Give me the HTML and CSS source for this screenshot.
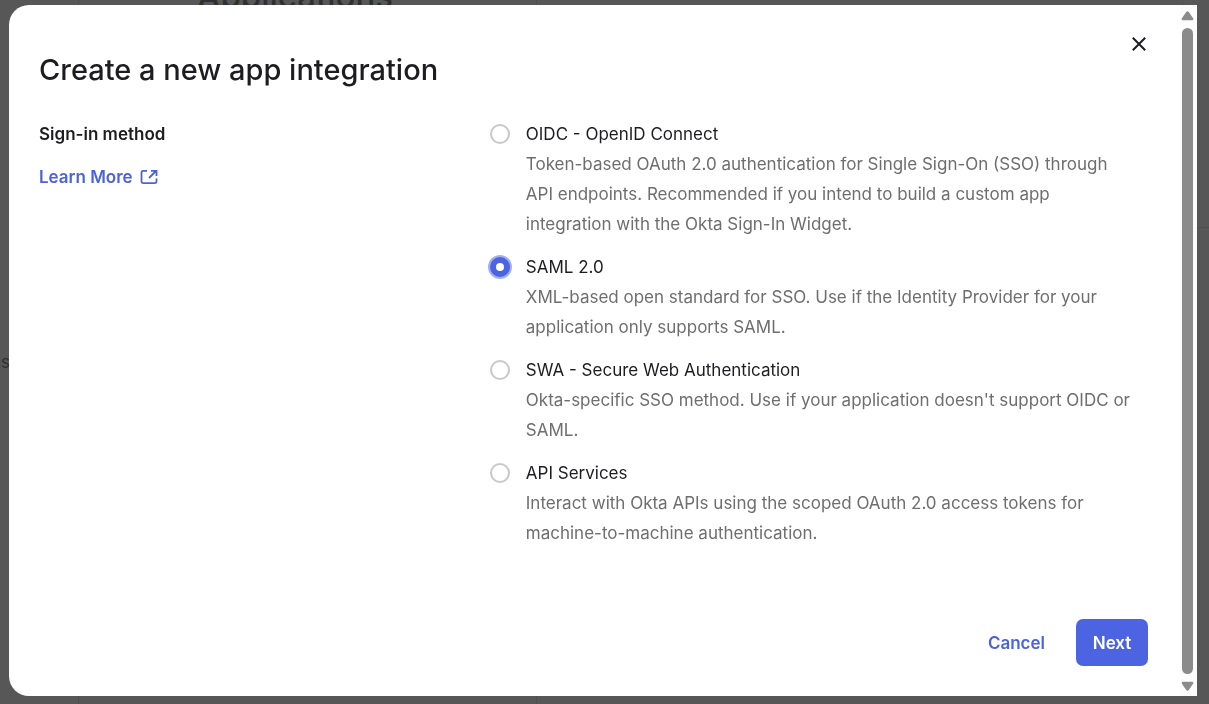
FILE: index.html
```html
<!DOCTYPE html>
<html lang="en">
<head>
    <meta charset="UTF-8">
    <meta name="viewport" content="width=device-width, initial-scale=1.0">
    <title>Create a new app integration</title>
    <link rel="stylesheet" href="styles.css">
</head>
<body>
    <div class="page">
        <nav class="sidebar">Applications</nav>
        <div class="page-main">
            <h2>Applications</h2>
        </div>
        <div class="page-list"></div>
    </div>

    <div class="backdrop">
        <div class="modal" role="dialog" aria-labelledby="modal-title">
            <form class="modal-body">
                <div class="modal-header">
                    <h1 id="modal-title">Create a new app integration</h1>
                    <button type="button" class="close" aria-label="Close">
                        <svg width="16" height="16" viewBox="0 0 16 16" fill="none" stroke="#1d1d21" stroke-width="2">
                            <path d="M1.8 1.8l12.4 12.4M14.2 1.8L1.8 14.2"/>
                        </svg>
                    </button>
                </div>

                <div class="columns">
                    <div class="intro">
                        <h2 id="method-label">Sign-in method</h2>
                        <a href="#" class="learn-more">Learn More
                            <svg width="18" height="16" viewBox="0 0 18 16" fill="none" stroke="currentColor" stroke-width="1.8">
                                <path d="M7 1.900H3Q1.500 1.900 1.500 3.400v9.200q0 1.500 1.500 1.500h12q1.500 0 1.500-1.500V9.500"/>
                                <path d="M9 9l7-7M11 1.900h5.500V7"/>
                            </svg>
                        </a>
                    </div>

                    <div class="options" role="radiogroup" aria-labelledby="method-label">
                        <div class="option">
                            <input type="radio" name="method" id="oidc">
                            <div>
                                <label for="oidc">OIDC - OpenID Connect</label>
                                <p>Token-based OAuth 2.0 authentication for Single Sign-On (SSO) through API endpoints. Recommended if you intend to build a custom app integration with the Okta Sign-In Widget.</p>
                            </div>
                        </div>
                        <div class="option">
                            <input type="radio" name="method" id="saml" checked>
                            <div>
                                <label for="saml">SAML 2.0</label>
                                <p>XML-based open standard for SSO. Use if the Identity Provider for your application only supports SAML.</p>
                            </div>
                        </div>
                        <div class="option">
                            <input type="radio" name="method" id="swa">
                            <div>
                                <label for="swa">SWA - Secure Web Authentication</label>
                                <p>Okta-specific SSO method. Use if your application doesn't support OIDC or SAML.</p>
                            </div>
                        </div>
                        <div class="option">
                            <input type="radio" name="method" id="api">
                            <div>
                                <label for="api">API Services</label>
                                <p>Interact with Okta APIs using the scoped OAuth 2.0 access tokens for machine-to-machine authentication.</p>
                            </div>
                        </div>
                    </div>
                </div>

                <div class="actions">
                    <button type="button" class="cancel">Cancel</button>
                    <button type="submit" class="next">Next</button>
                </div>
            </form>

            <div class="scrollbar" aria-hidden="true">
                <svg width="13" height="10" viewBox="0 0 14 10" fill="#8b8b8b">
                    <path d="M7 0q.8 0 1.400.800l4.600 6.700q.900 2-1 2H2q-1.900 0-1-2L5.600.8Q6.200 0 7 0z"/>
                </svg>
                <div class="thumb"></div>
                <svg width="13" height="10" viewBox="0 0 14 10" fill="#8b8b8b">
                    <path d="M7 10q.8 0 1.400-.8L13 2.500q.900-2-1-2H2q-1.900 0-1 2l4.600 6.700q.6.800 1.400.8z"/>
                </svg>
            </div>
        </div>
    </div>
</body>
</html>
```
FILE: styles.css
```css
* {
    box-sizing: border-box;
}
body {
    margin: 0;
    font-family: Inter, "Liberation Sans", sans-serif;
    font-size: 17px;
    line-height: 30px;
    color: #1d1d21;
}
h1, h2, p {
    margin: 0;
}
button {
    font: inherit;
    border: none;
    background: none;
    cursor: pointer;
}

/* page behind the dialog */
.page {
    display: flex;
    height: 100vh;
    overflow: hidden;
    background: #575757;
    color: #303030;
}
.sidebar {
    width: 79px;
    padding-top: 347px;
    border-right: 1px solid #4f4f4f;
    direction: rtl;
    text-indent: 68px;
}
.page-main {
    width: 458px;
    padding-left: 118px;
    border-right: 1px solid #4f4f4f;
}
.page-main h2 {
    margin-top: -22px;
    font-size: 33px;
    line-height: 36px;
    font-weight: 500;
}
.page-list {
    flex: 1;
    margin-top: 227px;
    border-top: 1px solid #4f4f4f;
}

.backdrop {
    position: fixed;
    inset: 0;
    display: flex;
    padding: 5px 12px 8px 9px;
}
.modal {
    flex: 1;
    display: flex;
    overflow: hidden;
    background: #fff;
    border-radius: 20px 0 0 20px;
}
.modal-body {
    flex: 1;
    display: flex;
    flex-direction: column;
    padding: 30px 33px 30px 30px;
}
.modal-header {
    display: flex;
    justify-content: space-between;
    align-items: flex-start;
}
.modal-header h1 {
    padding-top: 15px;
    font-size: 29px;
    line-height: 40px;
    font-weight: 500;
}
.close {
    padding: 0;
    width: 18px;
    height: 18px;
    display: grid;
    place-items: center;
}

.columns {
    display: grid;
    grid-template-columns: 2fr 3fr;
    gap: 12px;
    padding-top: 29px;
}
.intro h2 {
    font-size: 17px;
    font-weight: 600;
}
.learn-more {
    display: inline-flex;
    align-items: center;
    gap: 7px;
    margin-top: 13px;
    color: #4c62dd;
    font-weight: 600;
    text-decoration: none;
}
.options {
    display: flex;
    flex-direction: column;
    gap: 13px;
}
.option {
    display: flex;
    gap: 16px;
}
.option p {
    padding-right: 12px;
    color: #6e6e6e;
}
.option label {
    display: block;
}
.option input {
    appearance: none;
    flex: none;
    width: 20px;
    height: 20px;
    margin: 5px 0 0;
    border: 2px solid #c8c8c8;
    border-radius: 50%;
    background: #fff;
}
.option input:checked {
    border: 6px solid #4c64e1;
    box-shadow: 0 0 0 2px #a5b0f0;
}

.actions {
    display: flex;
    justify-content: flex-end;
    gap: 15px;
    margin-top: auto;
}
.actions button {
    height: 47px;
    padding: 0 16px;
    border-radius: 7px;
    font-weight: 600;
}
.cancel {
    color: #4c62dd;
}
.actions .next {
    min-width: 72px;
    background: #4c64e1;
    color: #fff;
}

.scrollbar {
    width: 16px;
    padding: 6px 3px 5px 0;
    display: flex;
    flex-direction: column;
    align-items: center;
    gap: 7px;
    background: #fcfcfc;
}
.scrollbar svg {
    flex: none;
}
.thumb {
    flex: 1;
    width: 11px;
    border-radius: 6px;
    background: #8b8b8b;
}
```
